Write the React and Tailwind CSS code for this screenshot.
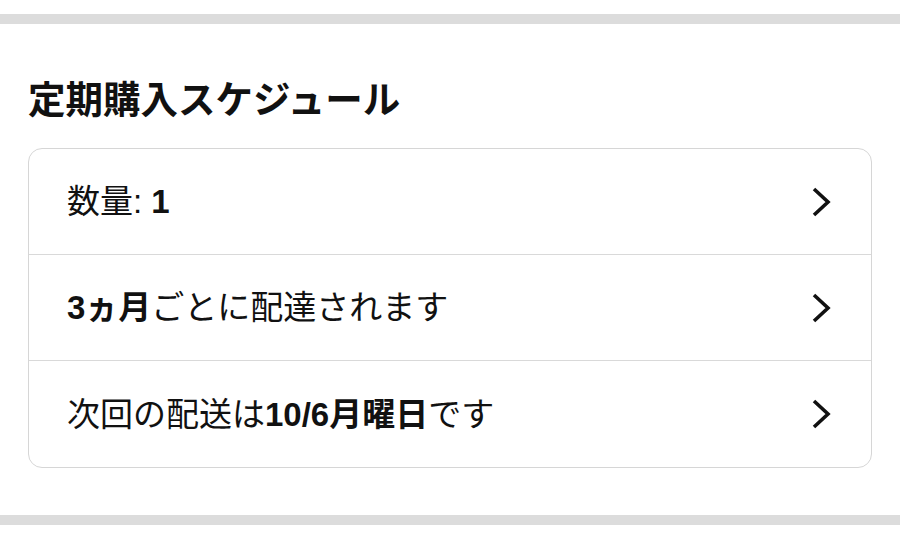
import React from "react";

const font = { fontFamily: '"Liberation Sans", "Noto Sans CJK JP", sans-serif' };

function Chevron() {
  return (
    <svg width="20" height="30" viewBox="0 0 20 30" fill="none" className="shrink-0">
      <polyline points="3,2 17,15 3,28" stroke="#111" strokeWidth="3.6" strokeLinecap="butt" strokeLinejoin="miter" />
    </svg>
  );
}

function Row({ children, last }) {
  return (
    <div className={`flex h-[106px] items-center justify-between pl-[38px] pr-[40px] ${last ? "" : "border-b border-[#d9d9d9]"}`}>
      <div className="text-[33px] leading-none text-[#111]">{children}</div>
      <Chevron />
    </div>
  );
}

export default function App() {
  return (
    <div className="h-[551px] w-[900px] overflow-hidden bg-white" style={font}>
      <div className="h-[14px]" />
      <div className="h-[10px] bg-[#dcdcdc]" />
      <div className="px-[28px]">
        <h1 className="pt-[57px] pb-[29px] text-[37.5px] font-bold leading-[38px] text-[#111]">定期購入スケジュール</h1>
        <div className="overflow-hidden rounded-[14px] border border-[#d6d6d6]">
          <Row>
            数量: <span className="font-bold">1</span>
          </Row>
          <Row>
            <span className="font-bold">3ヵ月</span>ごとに配達されます
          </Row>
          <Row last>
            次回の配送は<span className="font-bold">10/6月曜日</span>です
          </Row>
        </div>
      </div>
      <div className="h-[47px]" />
      <div className="h-[10px] bg-[#dcdcdc]" />
    </div>
  );
}
